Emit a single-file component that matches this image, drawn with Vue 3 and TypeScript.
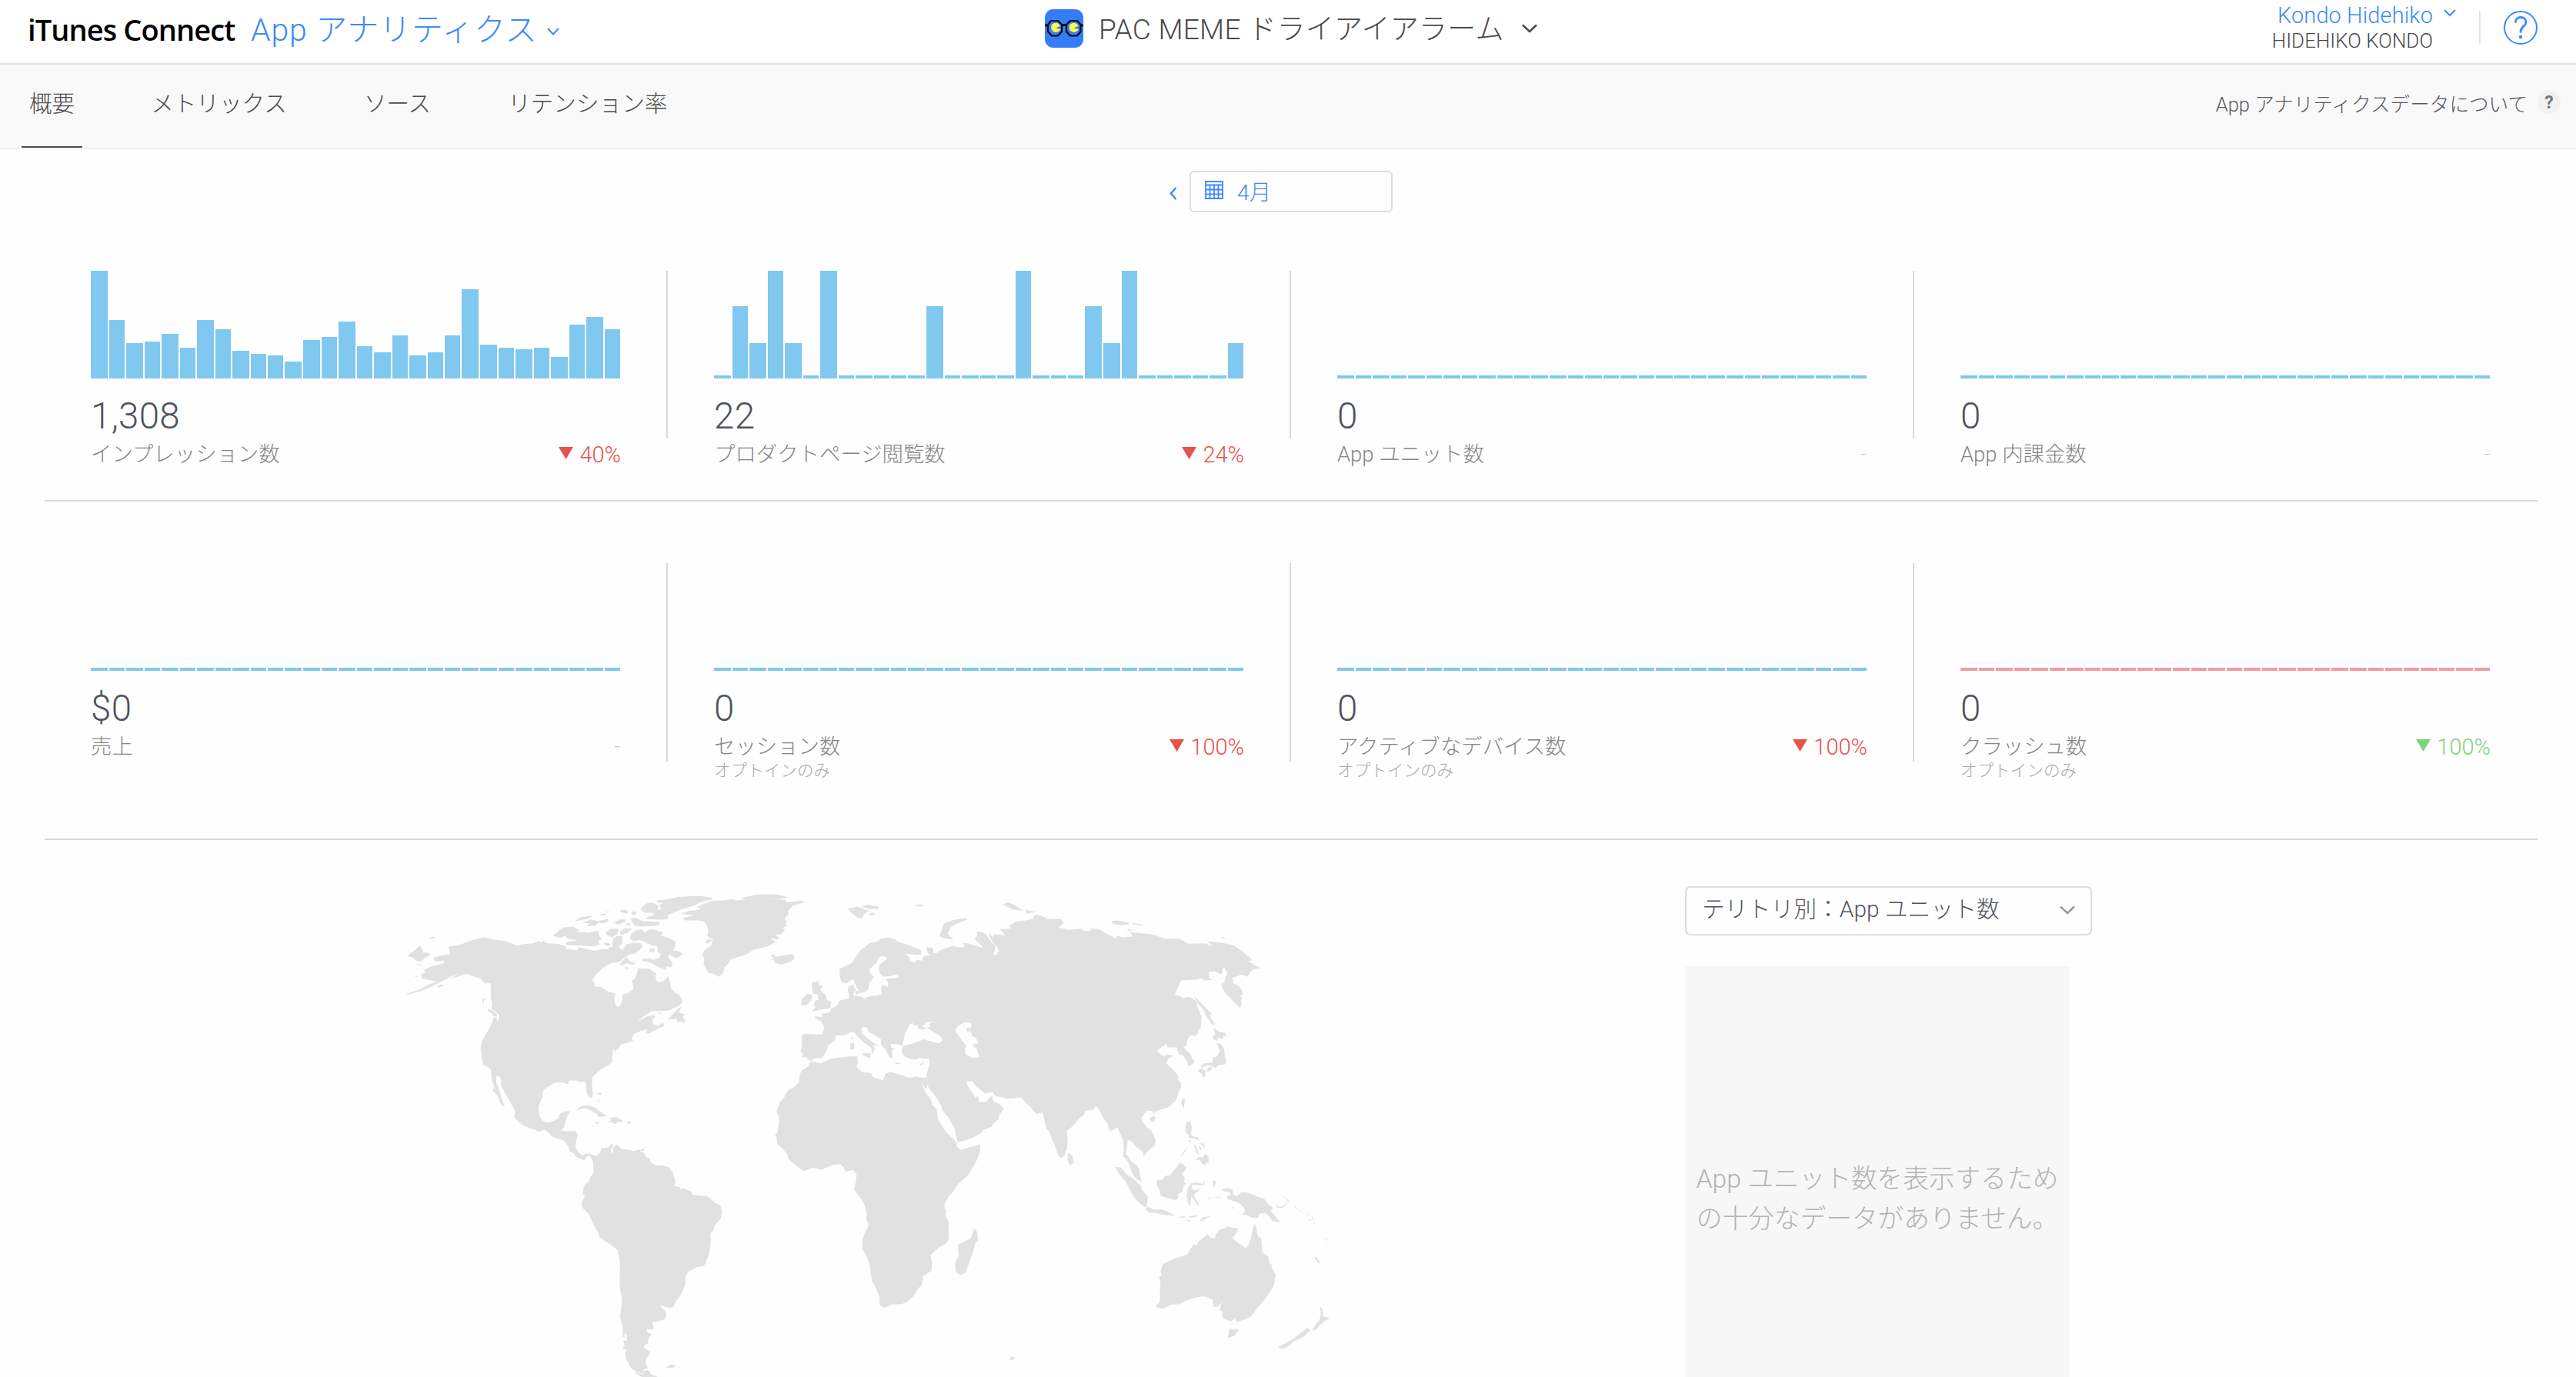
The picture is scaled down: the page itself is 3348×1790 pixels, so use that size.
<script setup lang="ts">
interface Metric {
  value: string
  label: string
  note?: string
  change?: string
  tone?: 'bad' | 'good'
  series: number[]
  alert?: boolean
}

/* Bar widths that fill a 688px sparkline on the 2px grid */
const barWidths: number[] = [
  22, 20, 22, 20, 22, 20, 22, 20, 22, 20, 20, 22, 22, 20, 22,
  20, 22, 20, 22, 20, 20, 22, 22, 20, 22, 20, 22, 20, 22, 20,
]

const flat: number[] = Array(30).fill(4)

const rows: Metric[][] = [
  [
    {
      value: '1,308', label: 'インプレッション数', change: '40%', tone: 'bad',
      series: [140, 76, 46, 48, 58, 40, 76, 64, 36, 32, 30, 22, 50, 54, 74, 42, 34, 56, 30, 34, 56, 116, 44, 40, 38, 40, 28, 70, 80, 64],
    },
    {
      value: '22', label: 'プロダクトページ閲覧数', change: '24%', tone: 'bad',
      series: [4, 94, 46, 140, 46, 4, 140, 4, 4, 4, 4, 4, 94, 4, 4, 4, 4, 140, 4, 4, 4, 94, 46, 140, 4, 4, 4, 4, 4, 46],
    },
    { value: '0', label: 'App ユニット数', series: flat },
    { value: '0', label: 'App 内課金数', series: flat },
  ],
  [
    { value: '$0', label: '売上', series: flat },
    { value: '0', label: 'セッション数', note: 'オプトインのみ', change: '100%', tone: 'bad', series: flat },
    { value: '0', label: 'アクティブなデバイス数', note: 'オプトインのみ', change: '100%', tone: 'bad', series: flat },
    { value: '0', label: 'クラッシュ数', note: 'オプトインのみ', change: '100%', tone: 'good', series: flat, alert: true },
  ],
]

const tabs: string[] = ['概要', 'メトリックス', 'ソース', 'リテンション率']

const americas: string[] = [
  '202,240 212,237 235,235 268,222 300,214 315,210 335,214 355,218 385,222 412,232 424,235 440,231 470,229 490,222 500,226 505,220 515,228 548,230 560,233 578,240 575,246 612,250 618,240 650,248 668,252 685,248 700,246 712,247 716,238 724,242 728,212 742,205 757,208 756,230 745,240 757,250 770,232 790,226 815,228 822,236 812,250 795,262 780,262 762,274 748,285 722,290 695,304 672,325 660,345 668,348 668,362 690,364 712,378 735,384 731,400 733,416 742,425 752,418 756,402 757,388 775,382 792,370 790,352 786,345 798,335 808,306 825,307 843,307 858,318 865,322 862,340 872,350 888,345 903,330 910,355 912,368 925,382 938,388 946,402 946,414 935,422 905,436 880,438 850,438 830,450 800,472 835,455 858,450 862,455 852,465 855,478 870,482 886,474 891,484 870,492 840,507 832,506 836,495 820,498 795,508 786,522 792,530 770,537 752,541 745,553 738,556 732,572 733,558 728,556 725,575 724,595 712,605 690,617 668,635 660,645 660,668 663,692 660,705 655,708 648,700 642,685 641,662 636,655 622,658 612,653 588,652 583,664 565,658 545,658 525,668 507,680 503,690 502,705 493,722 489,740 493,762 502,776 515,782 535,778 552,770 558,755 575,747 590,747 582,762 575,782 570,798 563,808 590,809 605,808 615,817 610,838 607,858 615,872 628,883 645,877 660,880 672,886 686,874 690,862 712,858 722,848 728,850 720,868 723,880 728,872 725,862 738,850 750,860 757,865 778,866 790,870 812,866 815,873 828,876 830,886 845,895 848,905 865,915 885,914 905,920 918,937 922,955 928,965 922,978 940,982 942,990 950,985 975,995 980,1005 1000,1008 1025,1009 1040,1020 1055,1032 1068,1037 1075,1055 1070,1078 1052,1100 1046,1116 1037,1125 1038,1150 1033,1190 1025,1205 1022,1218 1015,1225 995,1228 968,1242 957,1258 958,1280 950,1300 940,1320 932,1328 920,1350 910,1355 895,1352 878,1346 882,1355 892,1362 898,1375 890,1390 875,1396 852,1398 857,1418 850,1422 834,1420 838,1432 850,1436 840,1448 838,1464 828,1468 826,1478 845,1490 843,1500 835,1508 830,1524 838,1542 825,1545 822,1558 800,1551 785,1540 776,1525 768,1510 765,1492 772,1485 758,1480 763,1470 760,1455 771,1457 770,1436 764,1434 764,1446 758,1444 757,1408 749,1382 752,1365 756,1328 750,1300 748,1280 749,1210 742,1178 728,1165 685,1138 680,1122 665,1098 648,1062 630,1046 627,1028 638,1008 630,1003 633,985 640,970 650,965 655,950 665,938 664,905 656,890 650,884 640,890 636,900 622,893 608,888 603,877 588,870 586,858 572,838 555,833 535,826 520,812 508,804 490,810 470,802 445,793 428,782 412,765 416,748 405,728 390,702 383,690 371,670 369,643 356,637 354,655 362,675 370,700 375,715 382,728 376,732 365,718 360,700 350,690 342,682 350,672 342,655 338,620 330,611 315,605 310,590 309,570 305,550 308,538 315,520 330,497 343,472 347,458 357,460 358,470 364,460 364,450 350,436 340,430 342,412 337,395 338,380 338,352 320,352 305,338 285,332 262,323 245,328 210,338 235,320 190,342 150,362 120,374 70,388 72,383 110,372 155,350 165,346 120,338 115,325 130,318 125,310 150,300 190,290 188,282 160,285 155,272 205,262 208,252',
  '72,268 112,236 122,250 122,258 140,258 145,266 130,272 118,284 100,282 90,273',
  '143,214 150,208 163,210 150,214',
  '100,293 118,295 112,298',
  '96,331 108,329 100,334',
  '165,362 180,356 190,357 172,366',
  '312,400 324,397 316,405 315,415 311,410',
  '328,432 345,436 358,448 356,456 345,452 340,444 330,440',
  '535,205 568,180 600,177 622,188 590,196 570,208 560,212 545,208',
  '575,205 600,190 618,193 650,196 672,190 682,192 683,205 692,216 680,222 685,232 665,238 620,236 580,234 575,228 590,222 615,220 580,214',
  '605,160 625,148 662,143 650,152 620,158',
  '628,167 655,155 680,160 710,153 712,160 700,167 680,165 670,175 645,176 650,167',
  '750,126 765,124 775,130 770,138 752,132',
  '783,132 800,130 803,138 790,142',
  '733,162 750,155 770,155 765,163 745,171 735,168',
  '815,120 835,105 855,103 872,113 870,128 850,135 830,134 818,128',
  '865,97 900,92 940,85 1000,82 1045,88 1040,94 1010,100 985,112 940,125 905,140 900,145 905,152 880,156 830,153 840,146 860,140 850,136 880,122 875,110 890,104 870,103',
  '780,152 800,150 820,160 875,163 875,172 850,175 810,177 795,173 790,165',
  '702,194 720,184 745,183 742,198 725,210 708,203',
  '748,192 765,182 790,183 770,197 752,203',
  '765,168 780,165 783,172 770,173',
  '685,140 700,136 708,140 690,143',
  '700,132 712,129 716,132',
  '695,230 710,226 720,232 710,238',
  '780,215 785,200 800,188 820,186 828,195 850,184 875,192 886,193 884,200 875,203 900,210 925,222 925,238 918,250 940,254 950,262 928,276 920,270 905,262 903,272 917,290 912,303 898,300 895,310 870,302 850,290 820,283 820,277 845,275 855,280 875,272 880,262 868,255 870,240 850,235 830,225 810,218 795,222',
  '843,255 845,244 860,244 858,256',
  '748,293 770,270 778,282 798,290 790,296 770,290 755,297',
  '762,302 778,304 770,308',
  '902,464 920,444 945,422 940,435 935,441 955,448 950,456 958,465 952,475 945,470 932,472 930,462',
  '865,442 880,442 883,448',
  '943,137 970,128 1005,125 995,115 1040,98 1075,96 1110,92 1118,96 1150,94 1135,90 1185,78 1250,78 1285,87 1260,92 1205,90 1275,94 1280,102 1330,97 1335,102 1300,112 1285,128 1286,140 1272,152 1280,160 1278,176 1265,182 1275,187 1262,200 1240,203 1254,208 1252,218 1230,212 1240,222 1250,222 1220,238 1175,248 1150,264 1110,275 1100,280 1098,288 1082,303 1078,318 1065,332 1045,322 1030,320 1015,292 1018,278 1012,262 1018,250 1040,235 1045,218 1025,205 1030,198 1028,178 1018,163 1000,158 958,158 948,150 985,143',
  '1020,225 1030,215 1042,220 1030,230',
  '1228,268 1240,262 1245,270 1275,265 1300,262 1306,275 1295,285 1265,294 1238,288 1245,282 1230,280 1240,275',
  '610,744 625,732 645,729 670,736 685,748 708,762 680,765 675,755 650,742 635,738',
  '703,780 722,778 718,766 740,766 760,778 740,782 732,788 728,783',
  '665,780 685,782 678,787',
  '772,780 785,780 784,785 773,785',
  '674,692 690,690 688,698',
  '676,710 683,712 683,722',
  '818,864 825,862 825,870 812,870',
  '898,1537 910,1530 925,1533 918,1540 902,1540',
  '790,1550 822,1560 828,1548 838,1546 850,1560 872,1569 820,1569',
]

const euroAfrica: string[] = [
  '246,513 262,508 325,511 330,503 333,485 320,470 298,460 298,454 325,457 325,444 335,446 357,440 360,430 383,422 392,406 425,400 432,398 425,370 428,362 448,356 450,365 458,370 448,380 447,388 460,392 478,393 488,399 520,390 540,390 557,384 555,362 568,358 583,363 583,350 573,338 610,337 625,330 615,325 600,329 565,332 550,322 545,305 552,293 578,277 575,270 558,268 543,275 540,288 510,308 510,318 525,332 518,344 510,348 505,372 490,380 473,382 458,360 446,340 420,352 400,348 395,330 393,308 440,290 475,250 512,228 543,222 555,214 585,211 612,217 615,222 655,232 712,250 713,262 700,265 648,260 665,270 668,282 688,289 692,280 718,282 715,272 735,265 745,268 735,255 732,242 752,242 760,248 758,258 775,258 790,248 835,236 860,242 883,240 873,227 900,230 955,243 920,215 930,205 928,192 945,193 965,200 985,225 1000,235 1000,250 992,262 1005,265 1015,250 1005,238 990,225 978,208 975,195 992,210 995,200 1038,203 1018,185 1062,183 1055,175 1080,162 1120,158 1148,152 1152,143 1165,140 1200,150 1200,740 1185,750 1165,755 1145,745 1145,738 1120,722 1103,705 1050,708 1000,700 992,688 960,692 925,670 912,655 890,655 893,668 915,695 925,708 928,700 935,705 938,720 965,718 988,698 992,715 1020,727 1034,740 1015,760 1013,772 990,788 988,795 955,805 950,813 915,828 885,836 855,843 848,825 842,800 820,768 795,745 790,730 762,695 740,675 738,662 733,678 725,674 710,658 730,690 752,715 755,728 772,740 778,775 800,800 808,812 840,835 853,850 847,851 864,867 900,858 943,850 942,870 925,905 895,945 855,972 835,997 820,1008 803,1035 802,1046 809,1052 807,1072 819,1090 820,1140 808,1157 780,1168 748,1192 754,1212 752,1240 718,1256 719,1265 712,1285 697,1298 680,1320 655,1337 635,1343 600,1344 566,1354 550,1345 549,1320 532,1287 520,1272 514,1245 510,1215 495,1190 482,1170 483,1145 492,1123 507,1100 497,1078 500,1068 495,1048 485,1025 450,990 458,960 460,942 445,928 418,934 410,922 397,911 370,912 323,928 290,922 253,932 232,920 195,895 190,880 170,862 150,848 148,828 142,820 152,812 158,780 155,760 148,748 160,720 178,705 182,695 200,678 215,674 237,656 236,640 245,622 270,610 283,593 320,600 360,585 430,578 465,578 463,588 467,595 460,610 480,625 515,630 525,642 562,652 572,632 590,625 620,632 670,645 690,640 730,645 737,620 745,602 742,585 720,585 705,582 695,587 672,587 648,578 635,563 638,545 615,540 592,540 595,550 608,556 598,560 600,585 590,582 575,560 555,540 555,525 535,515 505,500 500,488 485,487 477,493 483,508 500,520 515,530 545,545 525,543 532,555 520,570 517,552 488,535 465,518 450,505 440,502 418,512 380,513 375,528 348,545 343,560 325,582 298,583 280,592 262,580 248,580 248,568 242,563 247,545',
  '605,595 635,600 615,602',
  '703,602 725,597 712,606',
  '482,569 513,568 512,583 485,574',
  '435,538 450,535 451,555 437,558',
  '438,522 446,517 445,530',
  '453,376 468,375 470,383 458,387',
  '288,348 315,347 312,357 326,360 318,374 340,388 345,404 362,410 355,430 320,433 286,440 300,424 292,420 300,405 312,403 308,387 290,385 285,362',
  '243,420 248,400 268,385 288,388 283,405 265,420',
  '425,121 465,115 508,128 490,138 480,151 465,150 440,135',
  '478,115 505,110 550,116 540,123 505,122',
  '508,136 525,134 535,140 515,143',
  '680,109 705,110 725,108 710,115',
  '783,206 795,180 800,168 830,158 885,150 893,155 850,168 825,180 815,200 838,217 800,213',
  '858,1158 905,1140 920,1108 930,1120 933,1148 925,1150 915,1180 885,1245 865,1254 848,1245 844,1215 858,1195 855,1165',
]

const seas: string[] = [
  '645,520 650,505 668,478 680,475 683,483 700,483 698,492 715,495 735,490 790,518 795,530 780,537 760,534 720,525 690,535 660,542 636,546 642,532',
  '715,485 735,473 757,470 745,478 748,486 730,490',
  '843,497 860,480 885,472 907,475 908,490 888,490 890,502 905,500 910,515 925,520 935,538 915,540 915,548 928,553 938,580 915,583 885,572 882,560 887,545 870,528',
]

const asiaPacific: string[] = [
  '145,142 180,153 235,153 248,166 228,180 265,187 318,184 325,190 355,190 350,184 385,185 418,200 455,215 455,205 478,210 518,207 505,195 590,200 645,215 695,214 735,230 800,229 828,238 808,223 860,226 912,235 978,275 980,282 965,284 1016,305 990,308 975,318 965,332 943,325 905,335 908,352 930,360 942,372 947,387 935,390 945,400 938,405 942,418 935,428 880,385 865,365 862,355 873,350 885,318 875,305 865,305 868,318 860,325 835,315 815,318 813,335 828,342 795,343 785,336 765,341 705,343 680,388 700,392 712,398 740,394 765,408 768,422 785,455 782,485 765,515 742,512 727,530 728,542 715,550 740,570 758,597 735,608 728,592 710,573 695,570 690,550 652,550 648,540 635,545 612,560 625,572 640,577 650,571 675,577 655,585 648,600 675,620 697,640 692,650 705,660 704,675 695,690 687,712 655,735 603,748 598,760 595,747 572,745 549,770 570,795 590,808 605,835 604,852 580,868 560,885 555,872 535,862 515,842 497,835 495,855 490,880 500,885 510,903 530,912 543,925 545,945 553,965 530,957 512,935 500,905 485,890 478,888 482,865 478,835 465,812 457,797 435,808 423,805 422,790 400,765 378,733 367,735 365,742 330,747 328,757 310,768 280,795 260,808 263,835 260,865 253,872 250,885 237,892 225,882 212,850 200,830 192,812 180,800 165,750 140,755 125,740 125,158 132,148',
  '10,110 30,102 60,112 90,128 50,124',
  '98,125 138,132 102,138',
  '265,875 280,885 288,905 272,915 263,900',
  '447,918 472,922 490,940 520,957 550,978 552,990 575,1010 572,1042 560,1042 530,1022 505,990 490,965 465,942',
  '565,1050 575,1042 605,1052 625,1050 655,1058 682,1070 650,1069 610,1062 580,1060',
  '697,1075 720,1070 722,1074 705,1077',
  '735,1072 768,1068 765,1073 740,1076',
  '722,1082 742,1084 738,1089',
  '775,1088 790,1075 820,1070 800,1080 782,1088',
  '610,975 612,960 635,958 640,948 660,945 680,928 700,905 712,910 728,922 708,942 720,955 715,967 725,968 712,985 708,998 695,1002 692,1018 680,1022 650,1015 625,1008 622,990',
  '735,1038 727,1010 732,985 742,970 770,967 790,972 800,962 795,975 750,975 745,985 755,992 780,987 758,1002 755,1010 775,1035 770,1038 745,1010 742,1036',
  '828,960 840,962 842,970 835,975 836,988 830,975',
  '810,1014 825,1015 815,1018',
  '832,1014 850,1010 865,1016 845,1014',
  '703,887 718,870 728,858 725,868 710,884',
  '725,780 742,780 748,800 742,818 752,825 770,828 778,840 760,832 738,830 735,820 722,812',
  '733,836 745,838 742,845',
  '753,852 765,855 770,870 775,880 765,878 762,865',
  '772,855 785,858 780,870',
  '780,843 795,848 797,860 785,852',
  '760,900 775,888 790,890 800,878 812,888 812,908 803,905 800,916 785,908 778,897',
  '705,720 712,707 720,710 716,740',
  '583,770 595,762 608,765 598,781 588,779',
  '755,393 780,410 828,450 815,450 822,462 838,479 828,482 805,455 790,432 772,415',
  '830,488 855,502 875,505 884,513 870,515 868,525 852,518 845,530 832,525 828,515 838,510',
  '843,535 860,540 873,555 875,575 882,592 878,602 848,606 840,614 828,610 825,606 800,607 785,613 780,610 795,600 828,597 828,580 835,582 848,575 856,560',
  '770,622 785,615 800,622 800,640 792,643 785,630',
  '805,615 825,610 825,618 808,625',
  '432,160 460,158 500,165 503,170 470,173 440,168',
  '513,166 552,170 550,173 518,170',
  '493,185 525,188 500,190',
  '862,210 872,210 876,215 865,214',
  '863,990 885,984 905,988 908,1002 920,1010 940,998 960,997 990,1007 1030,1018 1045,1035 1065,1046 1055,1055 1072,1072 1093,1090 1065,1088 1048,1072 1035,1062 1012,1064 1005,1078 985,1077 960,1068 943,1068 955,1055 950,1045 930,1030 900,1022 885,1018 885,1008 900,1005 895,998 875,995',
  '1070,1040 1095,1042 1112,1035 1113,1024 1118,1034 1100,1046 1080,1045',
  '1103,1007 1128,1025 1124,1028',
  '1145,1035 1158,1050 1150,1047',
  '1166,1050 1175,1056 1170,1056',
  '1187,1060 1202,1067 1198,1068',
  '1200,1080 1212,1082 1208,1086',
  '1212,1070 1222,1081 1216,1079',
  '1217,1089 1228,1092 1226,1095',
  '903,1045 912,1040 907,1050',
  '1268,1138 1274,1138 1273,1148',
  '1270,1151 1277,1156 1274,1157',
  '1222,1195 1235,1200 1249,1218 1240,1216',
  '606,1348 620,1338 624,1320 622,1300 625,1270 618,1260 630,1255 625,1240 635,1218 680,1202 728,1190 748,1165 757,1157 765,1163 775,1148 808,1128 820,1138 837,1140 840,1128 857,1112 885,1106 872,1100 905,1107 927,1108 925,1118 905,1140 935,1158 955,1170 968,1160 980,1135 985,1108 995,1095 1005,1133 1018,1140 1022,1182 1045,1197 1050,1218 1060,1222 1058,1232 1074,1252 1067,1285 1040,1320 1010,1348 975,1383 925,1398 915,1388 900,1396 870,1388 865,1375 866,1365 855,1362 860,1345 868,1335 848,1350 830,1352 828,1330 800,1320 780,1320 745,1327 725,1332 700,1343 665,1345 635,1357 615,1355',
  '893,1418 912,1422 932,1420 915,1440 888,1448',
  '1247,1350 1256,1358 1258,1380 1285,1387 1265,1395 1245,1408 1235,1420 1215,1425 1230,1405 1245,1392 1250,1375',
  '1085,1475 1115,1462 1145,1448 1200,1415 1208,1425 1180,1445 1150,1455 1110,1480 1090,1480',
  '37,1515 43,1503 58,1509 50,1515',
]
</script>

<template>
  <div class="page">
    <header class="topbar">
      <div class="brand">
        <span class="brand-name">iTunes Connect</span>
        <span class="brand-section">App アナリティクス</span>
        <svg class="brand-chevron" width="16" height="10" viewBox="0 0 16 10"><path d="M1 1 L8 8.5 L15 1" /></svg>
      </div>
      <div class="app-picker">
        <svg class="app-icon" width="50" height="50" viewBox="0 0 50 50">
          <rect width="50" height="50" rx="11" fill="#347df6" />
          <g fill="none" stroke="#0a0a14" stroke-width="2.2">
            <path d="M8 15 H17 L22 20 V29 L17 34.5 H9 L4 29 V20 Z" />
            <path d="M33 15 H42 L46.500 20 V29 L42 34.500 H33 L28 29 V20 Z" />
            <path d="M0 21 H4 M22 20.500 H28 M46 21 H50" stroke-width="3" />
          </g>
          <path fill="#fbf94b" d="M14 24.500 L20.500 26 A6.500 6.500 0 1 1 9 20 A6.500 6.500 0 0 1 20 22 Z" />
          <path fill="#fbf94b" d="M37.500 24.500 L44 26 A6.500 6.500 0 1 1 32.500 20 A6.500 6.500 0 0 1 43.500 22 Z" />
        </svg>
        <span class="app-name">PAC MEME ドライアイアラーム</span>
        <svg class="app-chevron" width="20" height="12" viewBox="0 0 20 12"><path d="M1 1.500 L10 10 L19 1.500" /></svg>
      </div>
      <div class="account">
        <div class="account-names">
          <span class="account-user">Kondo Hidehiko</span>
          <span class="account-org">HIDEHIKO KONDO</span>
        </div>
        <svg class="account-chevron" width="16" height="10" viewBox="0 0 16 10"><path d="M1 1 L8 8 L15 1" /></svg>
        <span class="account-divider"></span>
        <svg class="help" width="44" height="44" viewBox="0 0 44 44">
          <circle cx="22" cy="22" r="21" />
          <path d="M15.500 14.500 C15.500 10.500 18.500 8.500 22 8.500 C26 8.500 29 10.800 29 14.500 C29 20 22 20.500 22 27.500" />
          <circle class="help-dot" cx="22" cy="34" r="2.200" />
        </svg>
      </div>
    </header>

    <nav class="tabs">
      <span v-for="(tab, i) in tabs" :key="tab" class="tab" :class="{ active: i === 0 }">{{ tab }}</span>
      <span class="about">App アナリティクスデータについて</span>
      <span class="about-badge">?</span>
    </nav>

    <div class="period">
      <svg class="period-prev" width="10" height="17" viewBox="0 0 10 17"><path d="M8.500 1 L1.800 8.500 L8.500 16" /></svg>
      <div class="period-field">
        <svg class="calendar" width="24" height="24" viewBox="0 0 24 24">
          <path d="M1 1 H23 V23 H1 Z M1 5.500 H23 M1 11.500 H23 M1 17.300 H23 M6.500 6 V23 M12 6 V23 M17.500 6 V23" />
        </svg>
        <span>4月</span>
      </div>
    </div>

    <section v-for="(row, r) in rows" :key="r" class="metric-row" :class="{ second: r === 1 }">
      <article v-for="m in row" :key="m.label" class="metric">
        <div class="bars" :class="{ alert: m.alert }">
          <i v-for="(h, i) in m.series" :key="i" :style="{ height: h + 'px', width: barWidths[i] + 'px' }"></i>
        </div>
        <div class="value">{{ m.value }}</div>
        <div class="caption">
          <span>{{ m.label }}</span>
          <span v-if="m.change" class="change" :class="m.tone">
            <svg width="19" height="16" viewBox="0 0 19 16"><path d="M0 0 H19 L9.500 16 Z" /></svg>{{ m.change }}
          </span>
          <span v-else class="no-change">-</span>
        </div>
        <div v-if="m.note" class="note">{{ m.note }}</div>
      </article>
    </section>

    <section class="territory">
      <svg class="map" width="1260" height="660" viewBox="0 0 1260 660">
        <g transform="scale(0.40816 0.42092)">
          <polygon v-for="(p, i) in americas" :key="i" :points="p" />
        </g>
        <g transform="translate(460 0) scale(0.33333 0.42092)">
          <polygon v-for="(p, i) in euroAfrica" :key="i" :points="p" />
          <polygon v-for="(p, i) in seas" :key="'s' + i" class="sea" :points="p" />
        </g>
        <g transform="translate(800 0) scale(0.33333 0.42092)">
          <polygon v-for="(p, i) in asiaPacific" :key="i" :points="p" />
        </g>
      </svg>
      <div class="territory-side">
        <div class="select">
          <span>テリトリ別：App ユニット数</span>
          <svg width="20" height="12" viewBox="0 0 20 12"><path d="M1 1.500 L10 10 L19 1.500" /></svg>
        </div>
        <div class="empty">App ユニット数を表示するため<br />の十分なデータがありません。</div>
      </div>
    </section>
  </div>
</template>

<style>
body {
  margin: 0;
  background: #fefefe;
  overflow: hidden;
}
</style>

<style scoped>
.page {
  width: 3348px;
  height: 1790px;
  overflow: hidden;
  display: flex;
  flex-direction: column;
  background: #fefefe;
  color: #4a4a4a;
  font-family: Roboto, "Noto Sans CJK JP", sans-serif;
  font-weight: 300;
  white-space: nowrap;
}
.page * { box-sizing: border-box; }
svg { display: block; flex: none; fill: none; }

.topbar {
  height: 84px;
  flex: none;
  display: grid;
  grid-template-columns: 1358px 1fr auto;
  border-bottom: 2px solid #e3e3e3;
  background: #fff;
}
.brand, .app-picker { display: flex; align-items: center; height: 76px; }
.brand { padding-left: 36px; }
.brand-name {
  width: 290px;
  font: 600 38px/76px "Open Sans", sans-serif;
  letter-spacing: -0.9px;
  color: #000;
}
.brand-section {
  width: 385px;
  padding-bottom: 6px;
  font-size: 41px;
  letter-spacing: 0.8px;
  color: #3b8bf6;
}
.brand-chevron { stroke: #3b8bf6; stroke-width: 2; margin-top: 6px; }
.app-icon { margin-top: -2px; }
.app-name {
  width: 570px;
  padding: 0 0 6px 20px;
  font-size: 37px;
  letter-spacing: 0.3px;
}
.app-chevron { stroke: #4a4a4a; stroke-width: 2.5; margin-top: -2px; }
.account { display: flex; padding-right: 50px; }
.account-names { display: flex; flex-direction: column; align-items: flex-end; padding-top: 4px; line-height: 32px; }
.account-user { font-size: 29px; letter-spacing: 0.1px; color: #3b8bf6; }
.account-org { font-size: 26px; padding-top: 1px; }
.account-chevron { stroke: #3b8bf6; stroke-width: 2; margin: 12px 30px 0 14px; }
.account-divider { width: 2px; height: 44px; margin: 14px 30px 0 0; background: #e3e3e3; }
.help { margin-top: 14px; stroke: #3b8bf6; stroke-width: 2; }
.help path { stroke-width: 2.8; stroke-linecap: round; }
.help-dot { fill: #3b8bf6; stroke: none; }

.tabs {
  height: 110px;
  flex: none;
  display: flex;
  padding: 0 20px 0 28px;
  background: #f9f9f9;
  border-bottom: 2px solid #efefef;
  font-size: 29.600px;
  line-height: 102px;
}
.tab { height: 108px; padding: 0 10px; margin-right: 80px; }
.tab.active { border-bottom: 2px solid #4a4a4a; margin-right: 79px; }
.about { margin-left: auto; font-size: 25.600px; line-height: 105px; color: #55565d; }
.about-badge {
  width: 30px;
  height: 30px;
  margin: 34px 0 0 13px;
  border-radius: 50%;
  background: #f1f1f2;
  color: #777;
  font-size: 23px;
  font-weight: 700;
  line-height: 31px;
  text-align: center;
}

.period { display: flex; flex: none; height: 54px; margin: 28px 0 0 1520px; }
.period-prev { stroke: #3b8bf6; stroke-width: 2.4; margin: 21px 16px 0 0; }
.period-field {
  width: 264px;
  display: flex;
  padding-left: 18px;
  border: 2px solid #dedede;
  border-radius: 6px;
  font-size: 28.500px;
  line-height: 54px;
  color: #3b8bf6;
}
.calendar { stroke: #3b8bf6; stroke-width: 1.8; margin: 11px 18px 0 0; }

.metric-row {
  flex: none;
  display: flex;
  width: 3240px;
  height: 376px;
  margin-left: 58px;
  padding-top: 76px;
  border-bottom: 2px solid #d9d9d9;
}
.metric-row.second { height: 440px; padding-top: 80px; }
.metric { width: 810px; height: 218px; padding: 0 60px; border-right: 2px solid #d9d9d9; }
.second .metric { height: 258px; }
.metric:last-child { border-right-color: transparent; }
.bars { display: flex; gap: 2px; align-items: flex-end; height: 140px; }
.bars i { flex: none; background: #81c8f1; }
.bars.alert i { background: #ef9ba3; }
.value { margin-top: 20px; font-size: 47.500px; line-height: 59px; letter-spacing: 0.3px; color: #50535c; }
.caption {
  display: flex;
  justify-content: space-between;
  height: 37px;
  font-size: 27.400px;
  line-height: 40px;
  color: #858585;
}
.change { display: flex; gap: 8px; font-size: 29px; margin-right: -1px; }
.change svg { margin-top: 10px; }
.change path { fill: currentColor; }
.bad { color: #e8524d; }
.good { color: #7ed37d; }
.no-change { color: #c8c8c8; font-size: 26px; line-height: 38px; }
.note { font-size: 21.600px; line-height: 28px; color: #aaa; }

.territory { display: flex; height: 698px; flex: none; }
.map { margin: 38px 430px 0 500px; fill: #e1e1e1; }
.sea { fill: #fefefe; }
.territory-side { padding-top: 60px; }
.select {
  width: 529px;
  height: 64px;
  display: flex;
  justify-content: space-between;
  padding: 0 20px 0 20px;
  border: 2px solid #dcdcdc;
  border-radius: 7px;
  font-size: 29.800px;
  line-height: 55px;
  color: #50535c;
}
.select svg { stroke: #9b9b9b; stroke-width: 2.6; margin-top: 23px; }
.empty {
  width: 500px;
  height: 534px;
  margin-top: 40px;
  padding-top: 251px;
  background: #f7f7f7;
  font-size: 33.700px;
  line-height: 52px;
  text-align: center;
  color: #b3b3b3;
}
</style>
